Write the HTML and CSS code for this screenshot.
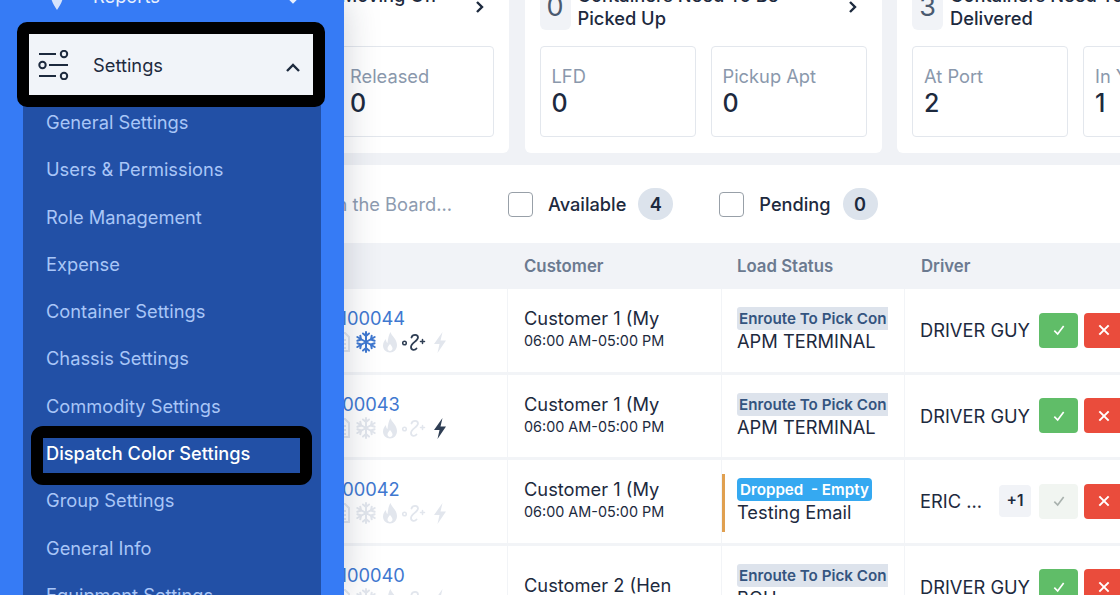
FILE: index.html
```html
<!DOCTYPE html>
<html lang="en">

<head>
    <meta charset="UTF-8" />
    <meta name="viewport" content="width=device-width, initial-scale=1.0" />
    <title>Dispatcher | Settings</title>
    <link rel="stylesheet" href="styles.css">
</head>

<body>

    <svg class="sprite" width="0" height="0">
        <symbol id="i-doc" viewBox="0 0 24 24">
            <path d="M6 3h9l4 4v14H6z M9 10h7 M9 14h7 M9 18h7" fill="none" stroke="currentColor" stroke-width="2" />
        </symbol>
        <symbol id="i-snow" viewBox="0 0 24 24">
            <g fill="none" stroke="currentColor" stroke-width="2" stroke-linecap="round">
                <path d="M12 2v20 M3.300 7l17.400 10 M20.700 7 3.300 17" />
                <path d="M9 3.500l3 2.500 3-2.500 M9 20.500l3-2.500 3 2.500 M3.400 10.800 7 9.500 6.300 5.700 M20.600 13.200 17 14.500l.7 3.800 M20.600 10.800 17 9.500l.7-3.800 M3.400 13.200 7 14.500l-.7 3.800" />
            </g>
        </symbol>
        <symbol id="i-flame" viewBox="0 0 24 24">
            <path d="M12.500 2c1 4 6.500 7 6.500 13 0 4.500-3 7.500-7 7.500s-7-3-7-7c0-3 1.500-5 3-6.500 0 2 .5 3.500 1.500 4C10 9 10.500 5 12.500 2zM12 14c-1.500 2-2.500 3-2.500 4.500S10.700 21 12 21s2.500-1 2.500-2.500S13.500 16 12 14z" fill="currentColor" fill-rule="evenodd" />
        </symbol>
        <symbol id="i-route" viewBox="0 0 24 24">
            <g fill="none" stroke="currentColor" stroke-linecap="round">
                <circle cx="2.500" cy="13" r="1.800" stroke-width="1.500" />
                <path d="M9.500 7.500c1-3.500 6.500-3.500 6.500 0 0 3.500-7 5.500-7 9.500 0 3.500 4 3.500 5.500 1.500" stroke-width="1.800" />
                <path d="M20.500 9.500v4 M18.500 11.500h4" stroke-width="1.500" />
            </g>
        </symbol>
        <symbol id="i-bolt" viewBox="0 0 24 24">
            <path d="M14.500 2 6 14h5.500L9.500 23 18 10.500h-5.500z" fill="currentColor" />
        </symbol>
        <symbol id="i-check" viewBox="0 0 24 24">
            <path d="M5 13l5 5L19 6" fill="none" stroke="currentColor" stroke-width="2.500" />
        </symbol>
        <symbol id="i-cross" viewBox="0 0 24 24">
            <path d="M5 5l14 14 M19 5 5 19" fill="none" stroke="currentColor" stroke-width="3" />
        </symbol>
    </svg>

    <aside class="sidebar">
        <a class="menu-item menu-item-top" href="#">
            <svg class="menu-icon" viewBox="0 0 32 30">
                <path d="M19 29c-3-5-6-9-6-14a6 6 0 0 1 12 0c0 5-3 9-6 14z" fill="#d5e3fc" />
            </svg>
            <span class="menu-label">Reports</span>
            <svg class="menu-chevron" viewBox="0 0 16 10">
                <path d="M2 2l6 6 6-6" fill="none" stroke="#e8f0fe" stroke-width="2.400" />
            </svg>
        </a>
        <a class="menu-item menu-item-open" href="#">
            <svg class="menu-icon" viewBox="0 0 32 30">
                <g fill="none" stroke="#1d2a3e" stroke-width="2">
                    <path d="M1 4h17 M11 15h19 M1 26h17" />
                    <circle cx="26" cy="4" r="3.200" />
                    <circle cx="4.500" cy="15" r="3.200" />
                    <circle cx="26" cy="26" r="3.200" />
                </g>
            </svg>
            <span class="menu-label">Settings</span>
            <svg class="menu-chevron" viewBox="0 0 16 10">
                <path d="M2 8l6-6 6 6" fill="none" stroke="#1d2a3e" stroke-width="2.400" />
            </svg>
        </a>
        <ul class="submenu">
            <li>General Settings</li>
            <li>Users &amp; Permissions</li>
            <li>Role Management</li>
            <li>Expense</li>
            <li>Container Settings</li>
            <li>Chassis Settings</li>
            <li>Commodity Settings</li>
            <li class="submenu-current">Dispatch Color Settings</li>
            <li>Group Settings</li>
            <li>General Info</li>
            <li>Equipment Settings</li>
        </ul>
    </aside>

    <main class="main">
        <section class="cards">
            <div class="card">
                <div class="card-head">
                    <span class="card-count">1</span>
                    <p class="card-title">Containers Are Moving Off</p>
                    <span class="card-arrow">
                        <svg viewBox="0 0 10 14"><path d="M2 2l5 5-5 5" fill="none" stroke="#1d2a3e" stroke-width="2.400" /></svg>
                    </span>
                </div>
                <div class="card-stats">
                    <div class="stat"><span class="stat-label">Not Released</span><span class="stat-value">0</span></div>
                    <div class="stat"><span class="stat-label">Released</span><span class="stat-value">0</span></div>
                </div>
            </div>
            <div class="card">
                <div class="card-head">
                    <span class="card-count">0</span>
                    <p class="card-title">Containers Need To Be Picked Up</p>
                    <span class="card-arrow">
                        <svg viewBox="0 0 10 14"><path d="M2 2l5 5-5 5" fill="none" stroke="#1d2a3e" stroke-width="2.400" /></svg>
                    </span>
                </div>
                <div class="card-stats">
                    <div class="stat"><span class="stat-label">LFD</span><span class="stat-value">0</span></div>
                    <div class="stat"><span class="stat-label">Pickup Apt</span><span class="stat-value">0</span></div>
                </div>
            </div>
            <div class="card">
                <div class="card-head">
                    <span class="card-count">3</span>
                    <p class="card-title">Containers Need To Be Delivered</p>
                </div>
                <div class="card-stats">
                    <div class="stat"><span class="stat-label">At Port</span><span class="stat-value">2</span></div>
                    <div class="stat"><span class="stat-label">In Yard</span><span class="stat-value">1</span></div>
                </div>
            </div>
        </section>

        <section class="toolbar">
            <input class="board-search" type="text" placeholder="Search in the Board...">
            <label class="filter">
                <span class="filter-box"></span>
                <span class="filter-label">Available</span>
                <span class="filter-count">4</span>
            </label>
            <label class="filter">
                <span class="filter-box"></span>
                <span class="filter-label">Pending</span>
                <span class="filter-count">0</span>
            </label>
        </section>

        <section class="board">
            <div class="row row-head">
                <div class="cell">Load #</div>
                <div class="cell">Customer</div>
                <div class="cell">Load Status</div>
                <div class="cell">Driver</div>
            </div>

            <div class="row">
                <div class="cell cell-load">
                    <a class="load-no" href="#">M100044</a>
                    <div class="load-icons">
                        <svg class="load-icon"><use href="#i-doc" /></svg>
                        <svg class="load-icon is-blue"><use href="#i-snow" /></svg>
                        <svg class="load-icon"><use href="#i-flame" /></svg>
                        <svg class="load-icon is-dark"><use href="#i-route" /></svg>
                        <svg class="load-icon"><use href="#i-bolt" /></svg>
                    </div>
                </div>
                <div class="cell cell-stack cell-customer">
                    <span class="customer">Customer 1 (My</span>
                    <span class="hours">06:00 AM-05:00 PM</span>
                </div>
                <div class="cell cell-stack">
                    <span class="tag">Enroute To Pick Con</span>
                    <span class="place">APM TERMINAL</span>
                </div>
                <div class="cell cell-driver">
                    <span class="driver-name">DRIVER GUY</span>
                    <button class="act act-ok"><svg><use href="#i-check" /></svg></button>
                    <button class="act act-no"><svg><use href="#i-cross" /></svg></button>
                </div>
            </div>

            <div class="row">
                <div class="cell cell-load">
                    <a class="load-no" href="#">S100043</a>
                    <div class="load-icons">
                        <svg class="load-icon"><use href="#i-doc" /></svg>
                        <svg class="load-icon"><use href="#i-snow" /></svg>
                        <svg class="load-icon"><use href="#i-flame" /></svg>
                        <svg class="load-icon"><use href="#i-route" /></svg>
                        <svg class="load-icon is-dark"><use href="#i-bolt" /></svg>
                    </div>
                </div>
                <div class="cell cell-stack cell-customer">
                    <span class="customer">Customer 1 (My</span>
                    <span class="hours">06:00 AM-05:00 PM</span>
                </div>
                <div class="cell cell-stack">
                    <span class="tag">Enroute To Pick Con</span>
                    <span class="place">APM TERMINAL</span>
                </div>
                <div class="cell cell-driver">
                    <span class="driver-name">DRIVER GUY</span>
                    <button class="act act-ok"><svg><use href="#i-check" /></svg></button>
                    <button class="act act-no"><svg><use href="#i-cross" /></svg></button>
                </div>
            </div>

            <div class="row">
                <div class="cell cell-load">
                    <a class="load-no" href="#">S100042</a>
                    <div class="load-icons">
                        <svg class="load-icon"><use href="#i-doc" /></svg>
                        <svg class="load-icon"><use href="#i-snow" /></svg>
                        <svg class="load-icon"><use href="#i-flame" /></svg>
                        <svg class="load-icon"><use href="#i-route" /></svg>
                        <svg class="load-icon"><use href="#i-bolt" /></svg>
                    </div>
                </div>
                <div class="cell cell-stack cell-customer">
                    <span class="customer">Customer 1 (My</span>
                    <span class="hours">06:00 AM-05:00 PM</span>
                </div>
                <div class="cell cell-stack cell-flagged">
                    <span class="tag tag-dropped">Dropped &nbsp;- Empty</span>
                    <span class="place">Testing Email</span>
                </div>
                <div class="cell cell-driver">
                    <span class="driver-name driver-name-short">ERIC ...</span>
                    <span class="driver-more">+1</span>
                    <button class="act act-off"><svg><use href="#i-check" /></svg></button>
                    <button class="act act-no"><svg><use href="#i-cross" /></svg></button>
                </div>
            </div>

            <div class="row">
                <div class="cell cell-load">
                    <a class="load-no" href="#">M100040</a>
                    <div class="load-icons">
                        <svg class="load-icon"><use href="#i-doc" /></svg>
                        <svg class="load-icon"><use href="#i-snow" /></svg>
                        <svg class="load-icon"><use href="#i-flame" /></svg>
                        <svg class="load-icon"><use href="#i-route" /></svg>
                        <svg class="load-icon"><use href="#i-bolt" /></svg>
                    </div>
                </div>
                <div class="cell cell-stack cell-customer">
                    <span class="customer">Customer 2 (Hen</span>
                </div>
                <div class="cell cell-stack">
                    <span class="tag">Enroute To Pick Con</span>
                    <span class="place">BOH</span>
                </div>
                <div class="cell cell-driver">
                    <span class="driver-name">DRIVER GUY</span>
                    <button class="act act-ok"><svg><use href="#i-check" /></svg></button>
                    <button class="act act-no"><svg><use href="#i-cross" /></svg></button>
                </div>
            </div>
        </section>
    </main>

</body>

</html>
```

FILE: styles.css
```css
* {
    box-sizing: border-box;
}

html,
body {
    height: 595px;
    overflow: hidden;
}

body {
    margin: 0;
    display: flex;
    font-family: Inter, "Liberation Sans", sans-serif;
    font-size: 18.3px;
    color: #1d2a3e;
    background-color: #f0f2f6;
}

.sprite {
    display: block;
    position: absolute;
}

/* sidebar */

.sidebar {
    position: relative;
    z-index: 2;
    flex: none;
    width: 344px;
    height: 595px;
    overflow: hidden;
    background-color: #367bf5;
    box-shadow: 0 0 34px rgba(30, 40, 70, 0.22);
}

.menu-item {
    position: relative;
    z-index: 1;
    display: flex;
    align-items: center;
    height: 62px;
    margin: 0 31px 0 28px;
    padding-left: 10px;
    color: #e8f0fe;
    text-decoration: none;
}

.menu-item-top {
    margin-top: -28px;
    padding-bottom: 14px;
}

.menu-icon {
    flex: none;
    width: 32px;
    height: 30px;
}

.menu-label {
    margin-left: 23px;
}

.menu-chevron {
    width: 16px;
    height: 10px;
    margin-left: auto;
    margin-right: 12px;
    margin-top: 6px;
}

.menu-item-open {
    background-color: #f1f4f9;
    border-bottom: 1px solid #2250a6;
    color: #1d2a3e;
}

.menu-item-open::after {
    content: "";
    position: absolute;
    inset: -12px -12px -12px -11px;
    border: 12px solid #000;
    border-radius: 10px;
}

.submenu {
    list-style: none;
    margin: 0 23px;
    padding: 3px 0 0 23px;
    background-color: #2250a6;
    color: #a9c6f7;
}

.submenu li {
    position: relative;
    height: 47.3px;
    line-height: 47.3px;
    white-space: nowrap;
}

.submenu-current {
    color: #fff;
    font-size: 18.2px;
    font-weight: 500;
}

.submenu-current::after {
    content: "";
    position: absolute;
    inset: -4px 9px -8px -15px;
    border: 12px solid #000;
    border-radius: 12px;
}

/* main area, starts under the sidebar */

.main {
    flex: none;
    width: 983px;
    height: 595px;
    margin-left: -207px;
    overflow: hidden;
}

.cards {
    display: flex;
    gap: 15.5px;
    margin-top: -31px;
    padding-left: 15px;
}

.card {
    flex: none;
    width: 357px;
    padding: 15px 15px 16px;
    background-color: #fff;
    border-radius: 6px;
}

.card-head {
    display: flex;
    height: 46px;
    margin-bottom: 16px;
}

.card-count {
    flex: none;
    width: 31px;
    height: 46px;
    line-height: 46px;
    text-align: center;
    font-size: 27px;
    color: #4a5a70;
    background-color: #f1f3f7;
    border-radius: 6px;
}

.card-title {
    flex: 1;
    margin: 0 0 0 7px;
    padding-right: 52px;
    font-weight: 500;
    line-height: 23px;
}

.card-arrow {
    flex: none;
    display: flex;
    align-items: center;
    margin-left: -36px;
    margin-right: 9px;
}

.card-arrow svg {
    width: 10px;
    height: 14px;
}

.card-stats {
    display: flex;
    gap: 15px;
}

.stat {
    flex: 1;
    display: flex;
    flex-direction: column;
    height: 91px;
    padding: 17px 11px 0;
    background-color: #fff;
    border: 1px solid #e3e7ed;
    border-radius: 4px;
}

.stat-label {
    line-height: 24px;
    color: #8a98ac;
}

.stat-value {
    line-height: 30px;
    font-size: 25px;
    font-weight: 500;
}

/* search and filters */

.toolbar {
    display: flex;
    align-items: center;
    height: 78px;
    margin-top: 12px;
    background-color: #fff;
}

.board-search {
    flex: none;
    width: 315px;
    margin-right: 56px;
    padding: 0;
    border: none;
    outline: none;
    background: none;
    text-align: right;
    font: inherit;
}

.board-search::placeholder {
    color: #8d9bb0;
    opacity: 1;
}

.filter {
    display: flex;
    align-items: center;
    margin-right: 46px;
    font-size: 18.2px;
    font-weight: 500;
}

.filter-box {
    width: 25px;
    height: 25px;
    margin-right: 15px;
    border: 1.5px solid #98a0a8;
    border-radius: 4px;
}

.filter-count {
    width: 35px;
    height: 32px;
    margin-left: 12px;
    line-height: 32px;
    text-align: center;
    font-weight: 600;
    background-color: #dce3ec;
    border-radius: 16px;
}

/* board table */

.board {
    background-color: #fff;
}

.row {
    display: grid;
    grid-template-columns: 371px 214px 183px 1fr;
    height: 85.5px;
    border-bottom: 3px solid #f2f4f7;
}

.row-head {
    height: 46px;
    border-bottom: none;
    background-color: #f1f3f7;
    color: #6b7a90;
    font-size: 16.8px;
    font-weight: 600;
}

.row-head .cell {
    display: flex;
    align-items: center;
    border: none;
}

.cell {
    position: relative;
    min-width: 0;
    padding: 0 15px 0 16px;
    overflow: hidden;
    border-right: 1px solid #f2f4f7;
}

.cell:nth-child(3) {
    padding-left: 15px;
}

.cell-load {
    padding: 17px 0 0 186px;
}

.load-no {
    display: block;
    line-height: 24px;
    color: #3f78d0;
    text-decoration: none;
}

.load-icons {
    display: flex;
    margin: 0 0 0 7px;
    color: #e2e6ed;
}

.load-icon {
    flex: none;
    width: 24px;
    height: 24px;
}

.load-icon:last-child {
    margin-left: 2px;
}

.load-icon.is-blue {
    color: #3f78d0;
}

.load-icon.is-dark {
    color: #2f3e54;
}

.cell-stack {
    display: flex;
    flex-direction: column;
    justify-content: center;
    white-space: nowrap;
}

.cell-customer {
    padding-bottom: 3px;
}

.customer {
    line-height: 24px;
}

.hours {
    line-height: 21px;
    font-size: 14.4px;
}

.tag {
    align-self: flex-start;
    width: 151px;
    height: 23px;
    padding: 0 2px;
    overflow: hidden;
    line-height: 23px;
    font-size: 15.2px;
    font-weight: 600;
    color: #34547f;
    background-color: #dde3ec;
    border-radius: 3px 0 0 3px;
}

.tag-dropped {
    width: auto;
    padding: 0 3px;
    color: #fff;
    background-color: #35a9f1;
    border-radius: 4px;
}

.place {
    line-height: 23px;
}

.cell-flagged::before {
    content: "";
    position: absolute;
    left: 0;
    top: 14px;
    width: 3px;
    height: 58px;
    background-color: #e0a050;
}

.cell-driver {
    display: flex;
    align-items: center;
    padding-left: 15px;
    padding-right: 0;
    overflow: visible;
    border-right: none;
    white-space: nowrap;
}

.driver-name {
    flex: none;
    width: 119px;
}

.driver-name-short {
    width: 79px;
}

.driver-more {
    flex: none;
    width: 32px;
    height: 32px;
    margin-right: 8px;
    line-height: 32px;
    text-align: center;
    font-size: 15.5px;
    font-weight: 600;
    background-color: #f1f3f7;
    border-radius: 4px;
}

.act {
    flex: none;
    display: flex;
    align-items: center;
    justify-content: center;
    width: 39px;
    height: 35px;
    margin-right: 6px;
    padding: 0;
    border: none;
    border-radius: 4px;
    color: #fff;
}

.act svg {
    width: 16px;
    height: 16px;
}

.act-ok {
    background-color: #60bd68;
}

.act-no {
    background-color: #ea4c3c;
}

.act-off {
    background-color: #f1f5f1;
    color: #a9b2ae;
}
```
